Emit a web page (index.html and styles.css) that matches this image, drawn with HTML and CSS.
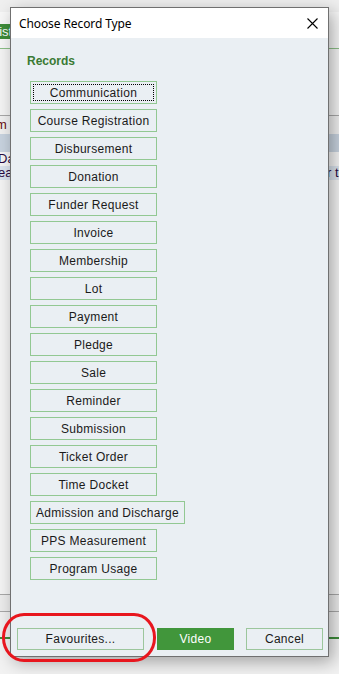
FILE: index.html
```html
<!DOCTYPE html>
<html>
<head>
<meta charset="utf-8">
<link rel="stylesheet" href="styles.css">
</head>
<body>
<div class="app">
  <div class="app-top"></div>
  <div class="app-tabs"><span class="tab">List</span></div>
  <div class="app-tabline"></div>
  <div class="app-space"></div>
  <div class="app-rule"></div>
  <div class="app-label">m</div>
  <div class="app-band"></div>
  <div class="app-text">Da</div>
  <div class="app-text hl">ea<span class="tail">r th</span></div>
  <div class="app-fill"></div>
  <div class="app-rule"></div>
  <div class="app-gap"></div>
  <div class="app-rule"></div>
  <div class="app-gap2"></div>
  <div class="app-greenline"></div>
</div>

<div class="dialog">
  <div class="titlebar">
    <span class="title">Choose Record Type</span>
    <svg class="close" width="11" height="11" viewBox="0 0 11 11"><path d="M0.5 0.5 L10.5 10.5 M10.5 0.5 L0.5 10.5" stroke="#000" stroke-width="1.1" fill="none"/></svg>
  </div>
  <div class="content">
    <div class="heading">Records</div>
    <div class="list">
      <button class="rec focus"><span>Communication</span></button>
      <button class="rec"><span>Course Registration</span></button>
      <button class="rec"><span>Disbursement</span></button>
      <button class="rec"><span>Donation</span></button>
      <button class="rec"><span>Funder Request</span></button>
      <button class="rec"><span>Invoice</span></button>
      <button class="rec"><span>Membership</span></button>
      <button class="rec"><span>Lot</span></button>
      <button class="rec"><span>Payment</span></button>
      <button class="rec"><span>Pledge</span></button>
      <button class="rec"><span>Sale</span></button>
      <button class="rec"><span>Reminder</span></button>
      <button class="rec"><span>Submission</span></button>
      <button class="rec"><span>Ticket Order</span></button>
      <button class="rec"><span>Time Docket</span></button>
      <button class="rec"><span>Admission and Discharge</span></button>
      <button class="rec"><span>PPS Measurement</span></button>
      <button class="rec"><span>Program Usage</span></button>
    </div>
  </div>
  <div class="footer">
    <button class="fbtn fav">Favourites...</button>
    <button class="fbtn video">Video</button>
    <button class="fbtn cancel">Cancel</button>
  </div>
</div>

<div class="annot"></div>
</body>
</html>
```

FILE: styles.css
```css
* { box-sizing: border-box; }
html, body { margin: 0; padding: 0; }
body {
  width: 339px;
  height: 674px;
  overflow: hidden;
  background: #f2f2f2;
  font-family: "Liberation Sans", Arial, sans-serif;
  position: relative;
}

/* background application */
.app { display: flex; flex-direction: column; width: 339px; }
.app-top { height: 12px; background: #efefef; }
.app-tabs { height: 27px; background: #f7f7f7; padding-top: 12px; }
.app-tabs .tab {
  display: block; width: 60px; height: 15px; margin-left: -8px;
  background: #3d8c3a; color: #fff; font-size: 13px; line-height: 15px; padding-left: 0;
  white-space: nowrap;
}
.app-tabline { height: 10px; background: #f7f7f7; border-bottom: 1px solid #8cbf87; }
.app-space { height: 66px; background: #f4f4f4; }
.app-rule { height: 1px; background: #a8a8a8; }
.app-label { height: 18px; background: #f0f0f0; color: #6b1010; font-size: 13px; line-height: 18px; margin-left: -4px; }
.app-band { height: 18px; background: #c8d3df; }
.app-text { height: 14px; background: #f5f5f5; color: #2a0a40; font-size: 13px; line-height: 14px; margin-left: -2px; position: relative; white-space: nowrap; }
.app-text.hl { background: #dbe4ee; }
.app-text .tail { position: absolute; left: 329px; top: 0; white-space: nowrap; }
.app-fill { flex: 0 0 414px; background: #f4f4f4; }
.app-gap { height: 16px; background: #ececec; }
.app-gap2 { height: 25px; background: #f0f0f0; }
.app-greenline { height: 2px; background: #3d8c3a; }

/* dialog */
.dialog {
  position: absolute;
  left: 10px;
  top: 7px;
  width: 319px;
  height: 650px;
  border: 1px solid #707070;
  background: #eaeff3;
  display: flex;
  flex-direction: column;
  box-shadow: 4px 5px 16px rgba(0,0,0,0.33);
}
.titlebar {
  height: 30px;
  flex: 0 0 30px;
  background: #ffffff;
  display: flex;
  align-items: center;
  justify-content: space-between;
  padding: 0 10px 0 8px;
}
.title {
  font-family: "Noto Sans", "Open Sans", sans-serif;
  font-size: 12px;
  color: #000;
  letter-spacing: -0.1px;
}

.content {
  flex: 1;
  padding: 16px 0 0 16px;
}
.heading {
  font-family: "Liberation Sans", Arial, sans-serif;
  font-weight: bold;
  font-size: 12px;
  color: #3a7a33;
  height: 14px;
  line-height: 14px;
  margin-bottom: 13px;
}
.list {
  display: flex;
  flex-direction: column;
  align-items: flex-start;
  gap: 5px;
  padding-left: 3px;
}
.rec {
  min-width: 127px;
  height: 23px;
  padding: 0 5px;
  background: #eaeff3;
  border: 1px solid #92c892;
  font-family: "Liberation Sans", Arial, sans-serif;
  font-size: 12px;
  letter-spacing: 0.3px;
  color: #1a1a1a;
  display: flex;
  align-items: center;
  justify-content: center;
  white-space: nowrap;
  position: relative;
}
.rec.focus::after {
  content: "";
  position: absolute;
  inset: 2px;
  border: 1px dotted #000;
}

.footer {
  flex: 0 0 auto;
  display: flex;
  align-items: center;
  padding: 0 5px 6px 6px;
}
.fbtn {
  height: 22px;
  font-family: "Liberation Sans", Arial, sans-serif;
  font-size: 12px;
  letter-spacing: 0.3px;
  color: #1a1a1a;
  background: #eaeff3;
  border: 1px solid #9cc69c;
  padding: 0;
}
.fav { width: 127px; }
.video {
  width: 77px;
  margin-left: 13px;
  background: #41963b;
  border-color: #41963b;
  color: #fff;
}
.cancel { width: 77px; margin-left: auto; }

/* annotation overlay */
.annot {
  position: absolute;
  left: 2px;
  top: 613px;
  width: 154px;
  height: 49px;
  border: 3.5px solid #e8161e;
  border-radius: 22px / 24px;
}
```
